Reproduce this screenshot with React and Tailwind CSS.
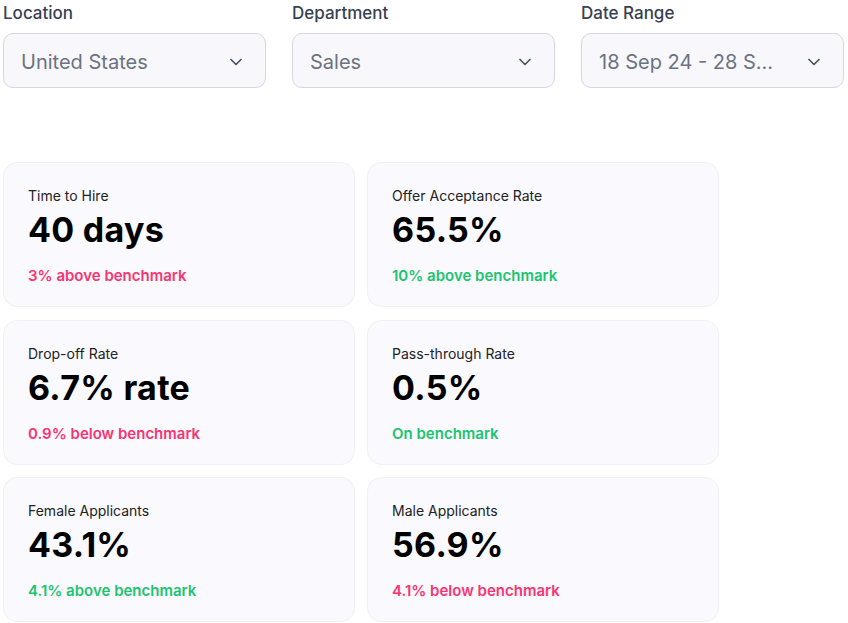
import React from "react";

const Chevron = () => (
  <svg width="20" height="20" viewBox="0 0 24 24" fill="none" stroke="#4b5563" strokeWidth="2.1" strokeLinecap="round" strokeLinejoin="round">
    <path d="M6 9l6 6 6-6" />
  </svg>
);

const filters = [
  { label: "Location", value: "United States" },
  { label: "Department", value: "Sales" },
  { label: "Date Range", value: "18 Sep 24 - 28 S..." },
];

const cards = [
  { label: "Time to Hire", value: "40 days", note: "3% above benchmark", good: false },
  { label: "Offer Acceptance Rate", value: "65.5%", note: "10% above benchmark", good: true },
  { label: "Drop-off Rate", value: "6.7% rate", note: "0.9% below benchmark", good: false },
  { label: "Pass-through Rate", value: "0.5%", note: "On benchmark", good: true },
  { label: "Female Applicants", value: "43.1%", note: "4.1% above benchmark", good: true },
  { label: "Male Applicants", value: "56.9%", note: "4.1% below benchmark", good: false },
];

export default function App() {
  return (
    <div className="w-[848px] h-[623px] overflow-hidden bg-white pl-[3px]" style={{ fontFamily: "Inter, 'Noto Sans', sans-serif" }}>
      <div className="grid grid-cols-[263px_263px_263px] gap-x-[26px] pt-[2px]">
        {filters.map((f) => (
          <div key={f.label} className="flex flex-col">
            <div className="text-[17px] leading-[22px] font-medium text-[#374151]">{f.label}</div>
            <div className="mt-[9px] h-[55px] rounded-[10px] border border-[#d5d7dd] bg-[#f8f8fc] flex items-center justify-between pl-[17px] pr-[19px] pt-[2px]">
              <span className="text-[20px] text-[#6b7280]">{f.value}</span>
              <Chevron />
            </div>
          </div>
        ))}
      </div>
      <div className="mt-[74px] grid grid-cols-[352px_352px] gap-x-[12px] gap-y-[12.5px]">
        {cards.map((c) => (
          <div key={c.label} className="h-[145px] rounded-[14px] border border-[#f0f0f6] bg-[#f9f9fe] pl-[24px] pt-[23px]">
            <div className="text-[14px] leading-[20px] text-[#222]">{c.label}</div>
            <div className="mt-[4px] text-[34px] leading-[40px] font-bold text-black tracking-[0.3px]">{c.value}</div>
            <div className={`mt-[15px] text-[15px] leading-[22px] font-semibold ${c.good ? "text-[#1cc46f]" : "text-[#f93470]"}`}>{c.note}</div>
          </div>
        ))}
      </div>
    </div>
  );
}
